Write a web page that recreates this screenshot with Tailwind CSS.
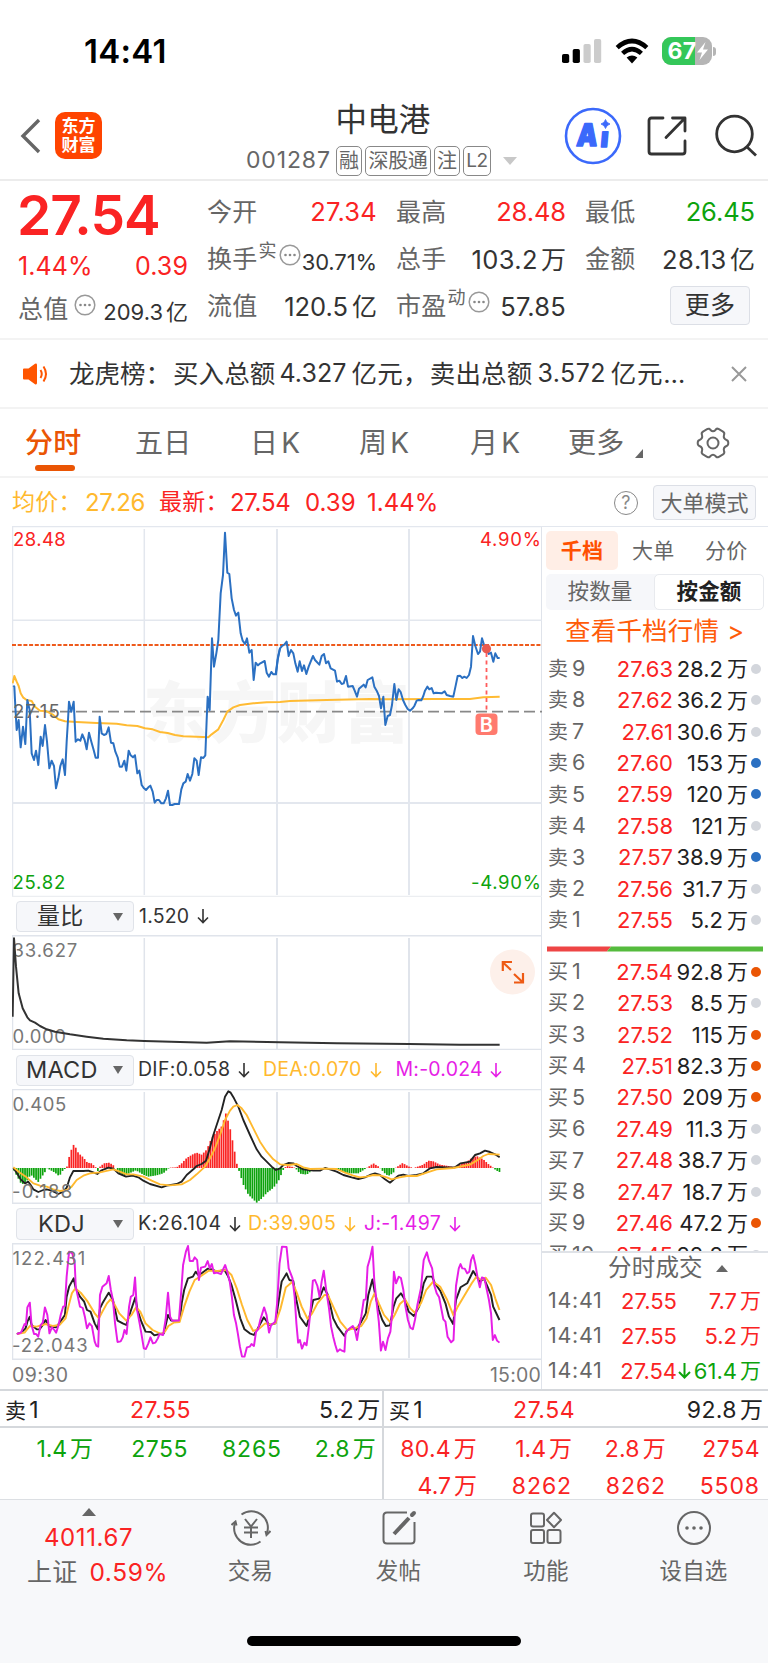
<!DOCTYPE html>
<html lang="zh-CN">
<head>
<meta charset="utf-8">
<title>中电港 001287</title>
<script src="https://cdn.jsdelivr.net/npm/@tailwindcss/browser@4"></script>
</head>
<body class="w-[768px] h-[1663px] overflow-hidden bg-white font-[Inter,'Noto_Sans_CJK_SC',sans-serif] leading-none text-[#333] tracking-[0.2px] whitespace-nowrap">

<!-- status bar -->
<div class="h-[100px] flex items-start justify-between pl-[84px] pr-[52px] text-black">
  <div class="mt-[35px] text-[33px] font-semibold tracking-[0.300px]">14:41</div>
  <div class="flex mt-[36px] items-center h-[30px]">
    <svg class="w-[40px] h-[26px]" viewBox="0 0 40 26"><g fill="#000"><rect x="0" y="16" width="7.2" height="9" rx="1.8"/><rect x="10.700" y="11" width="7.200" height="14" rx="1.8"/></g><g fill="#ccc"><rect x="21.500" y="6" width="7.200" height="19" rx="1.8"/><rect x="32" y="1" width="7.200" height="24" rx="1.800"/></g></svg>
    <svg class="ml-[13px] w-[34px] h-[26px]" viewBox="0 0 34 26"><g fill="none" stroke="#000" stroke-width="4.6"><path d="M2.200 9.600Q17 -3.600 31.800 9.600"/><path d="M7.600 15.400Q17 7 26.400 15.400"/></g><path d="M11.600 19.600Q17 15.400 22.400 19.600L17 25.400Z" fill="#000"/></svg>
    <div class="ml-[13px] relative w-[50px] h-[28px] rounded-[9px] overflow-hidden bg-[#b5b5b5]">
      <div class="w-[33px] h-full bg-[#34c759]"></div>
      <div class="absolute inset-0 flex items-center pl-[6px] text-white text-[23px] font-bold">67<svg class="w-[13px] h-[20px]" viewBox="0 0 13 20"><path d="M9.500 1L1 11.500H6L3.500 19L12 8.500H7Z" fill="#fff"/></svg></div>
    </div>
    <div class="ml-[1.500px] w-[3px] h-[9px] rounded-r-full bg-[#b5b5b5]"></div>
  </div>
</div>

<!-- title bar -->
<div class="h-[81px] border-b-2 border-[#ececec] flex items-start">
  <svg class="mt-[17px] ml-[19px] w-[24px] h-[38px]" viewBox="0 0 24 38"><path d="M20 3L4 19L20 35" fill="none" stroke="#666" stroke-width="3.400"/></svg>
  <div class="mt-[12px] ml-[12px] w-[47px] h-[47px] rounded-[10px] bg-[#ff4400] text-white font-bold text-[17px] flex flex-col items-center justify-center gap-[2px] tracking-normal"><span>东方</span><span>财富</span></div>
  <div class="ml-[144px] w-[275px] flex flex-col">
    <div class="mt-[4px] w-full pr-[1px] text-center text-[31.500px]">中电港</div>
    <div class="mt-[10px] flex items-center h-[30px] text-[#666] text-[21px]">
      <span class="w-[90px] text-[23px] tracking-[0.85px]">001287</span>
      <span class="w-[26px] h-[30px] border-[1.500px] border-[#888] rounded-[5px] flex items-center justify-center text-[20px]">融</span>
      <span class="ml-[3px] w-[66px] h-[30px] border-[1.500px] border-[#888] rounded-[5px] flex items-center justify-center text-[20px] tracking-[-0.300px]">深股通</span>
      <span class="ml-[3px] w-[26px] h-[30px] border-[1.500px] border-[#888] rounded-[5px] flex items-center justify-center text-[20px]">注</span>
      <span class="ml-[3px] w-[28px] h-[30px] border-[1.500px] border-[#888] rounded-[5px] flex items-center justify-center text-[19px] tracking-[-0.500px]">L2</span>
      <svg class="ml-[12px] w-[14px] h-[8px]" viewBox="0 0 14 8"><path d="M0 0H14L7 8Z" fill="#c8c8c8"/></svg>
    </div>
  </div>
  <svg class="ml-[43px] mt-[7px] w-[58px] h-[58px]" viewBox="0 0 58 58" fill="#3b69fb"><circle cx="29" cy="29" r="27" fill="#fff" stroke="#3b69fb" stroke-width="2.600"/><g transform="translate(0 39) skewX(-5)" font-weight="900" stroke="#3b69fb" stroke-width="1.600" stroke-linejoin="round"><text x="12" y="0" font-size="31" textLength="21" lengthAdjust="spacingAndGlyphs">A</text><text x="36" y="1" font-size="28" textLength="8" lengthAdjust="spacingAndGlyphs">ı</text></g><path d="M41.500 12.500Q42.500 16 46 17Q42.500 18 41.500 21.500Q40.500 18 37 17Q40.500 16 41.500 12.500Z" stroke="#3b69fb" stroke-width=".8"/></svg>
  <svg class="ml-[24px] mt-[15px] w-[42px] h-[42px]" viewBox="0 0 42 42" fill="none" stroke="#333" stroke-width="2.800" stroke-linecap="round" stroke-linejoin="round"><path d="M17 3H5.500Q3 3 3 5.500V36.500Q3 39 5.500 39H36.500Q39 39 39 36.500V26"/><path d="M26.500 3H39V16M38 4L20 22.500"/></svg>
  <svg class="ml-[26px] mt-[13px] w-[46px] h-[46px]" viewBox="0 0 46 46" fill="none" stroke="#333" stroke-width="2.800"><circle cx="20.500" cy="21" r="17.800"/><path d="M32.500 33.500L42 42.500"/></svg>
</div>

<!-- quote summary -->
<div class="h-[159px] border-b-2 border-[#f3f3f3] pl-[18px] pt-[7px] grid grid-cols-[170px_170px_170px_170px] gap-x-[19px] text-[25px] text-[#666]">
  <div class="flex flex-col">
    <div class="h-[55px] flex items-center text-[55px] font-semibold text-[#fa2323] tracking-[-0.900px] -ml-[1px]">27.54</div>
    <div class="h-[47px] flex items-center justify-between text-[#fa2323] tracking-[0.100px]"><span>1.44%</span><span>0.39</span></div>
    <div class="h-[39px] flex items-center"><span>总值</span><svg class="ml-[6px] mb-[9px] w-[22px] h-[22px]" viewBox="0 0 22 22"><circle cx="11" cy="11" r="9.800" fill="none" stroke="#999" stroke-width="1.500"/><g fill="#888"><circle cx="6.500" cy="11" r="1.300"/><circle cx="11" cy="11" r="1.300"/><circle cx="15.500" cy="11" r="1.300"/></g></svg><span class="ml-auto mt-[5px] text-[22px] text-[#333] tracking-[0]">209.3<span class="ml-[3px]">亿</span></span></div>
  </div>
  <div class="flex flex-col text-[25.500px]">
    <div class="h-[48px] flex items-center justify-between"><span class="text-[25px]">今开</span><span class="text-[#fa2323]">27.34</span></div>
    <div class="h-[47px] flex items-center"><span class="text-[25px]">换手</span><span class="ml-[1px] mb-[17px] text-[18px]">实</span><svg class="ml-[2px] mb-[9px] w-[22px] h-[22px]" viewBox="0 0 22 22"><circle cx="11" cy="11" r="9.800" fill="none" stroke="#999" stroke-width="1.500"/><g fill="#888"><circle cx="6.500" cy="11" r="1.300"/><circle cx="11" cy="11" r="1.300"/><circle cx="15.500" cy="11" r="1.300"/></g></svg><span class="ml-auto mt-[4px] text-[22px] text-[#333] tracking-[-0.100px]">30.71%</span></div>
    <div class="h-[47px] flex items-center justify-between"><span class="text-[25px]">流值</span><span class="text-[#333] tracking-[0]">120.5<span class="ml-[4px] text-[25px]">亿</span></span></div>
  </div>
  <div class="flex flex-col text-[25.500px]">
    <div class="h-[48px] flex items-center justify-between"><span class="text-[25px]">最高</span><span class="text-[#fa2323] tracking-[-0.100px]">28.48</span></div>
    <div class="h-[47px] flex items-center justify-between"><span class="text-[25px]">总手</span><span class="text-[#333] tracking-[0.400px]">103.2<span class="ml-[3px] text-[25px] tracking-[0]">万</span></span></div>
    <div class="h-[47px] flex items-center"><span class="text-[25px]">市盈</span><span class="ml-[1px] mb-[17px] text-[18px]">动</span><svg class="ml-[2px] mb-[9px] w-[22px] h-[22px]" viewBox="0 0 22 22"><circle cx="11" cy="11" r="9.800" fill="none" stroke="#999" stroke-width="1.500"/><g fill="#888"><circle cx="6.500" cy="11" r="1.300"/><circle cx="11" cy="11" r="1.300"/><circle cx="15.500" cy="11" r="1.300"/></g></svg><span class="ml-auto text-[#333]">57.85</span></div>
  </div>
  <div class="flex flex-col text-[25.500px]">
    <div class="h-[48px] flex items-center justify-between"><span class="text-[25px]">最低</span><span class="text-[#0da30d] tracking-[-0.100px]">26.45</span></div>
    <div class="h-[47px] flex items-center justify-between"><span class="text-[25px]">金额</span><span class="text-[#333] tracking-[0.600px]">28.13<span class="ml-[3px] text-[25px] tracking-[0]">亿</span></span></div>
    <div class="h-[47px] flex items-center justify-end pr-[5px]"><span class="w-[80px] h-[39px] mb-[3px] rounded-[4px] border-[1.500px] border-[#dcdfe6] bg-[#f6f7fa] text-[25px] text-[#333] flex items-center justify-center">更多</span></div>
  </div>
</div>

<!-- news -->
<div class="h-[69px] border-b-2 border-[#f3f3f3] flex items-center pl-[22px] text-[25.500px]">
  <svg class="w-[26px] h-[22px]" viewBox="0 0 26 22"><path d="M1 6.500Q1 5.500 2 5.500H6.500L13 .8Q15 0 15 2V20Q15 22 13 21.200L6.500 16.500H2Q1 16.500 1 15.500Z" fill="#ff5500"/><path d="M18.500 7Q21 11 18.500 15M21.500 3.500Q26.500 11 21.500 18.500" fill="none" stroke="#ff5500" stroke-width="2"/></svg>
  <span class="ml-[21px] tracking-[0]">龙虎榜：</span><span class="ml-[2px] tracking-[0.100px]">买入总额</span><span class="ml-[4px] tracking-[0.100px] text-[25px]">4.327</span><span class="ml-[5px]">亿元，</span><span class="ml-[1px] tracking-[0.200px]">卖出总额</span><span class="ml-[5px] tracking-[0.400px] text-[25px]">3.572</span><span class="ml-[5px] tracking-[0.700px]">亿元…</span>
  <svg class="absolute left-[730px] w-[18px] h-[18px]" viewBox="0 0 18 18"><path d="M2 2L16 16M16 2L2 16" stroke="#999" stroke-width="2"/></svg>
</div>

<!-- period tabs -->
<div class="h-[69px] border-b-2 border-[#f3f3f3] flex items-center text-[28px] text-[#666] relative">
  <span class="ml-[25px] w-[110px] text-[#ea5504] font-medium">分时</span>
  <span class="w-[115px]">五日</span>
  <span class="w-[109px]">日<span class="ml-[3px]">K</span></span>
  <span class="w-[111px]">周<span class="ml-[3px]">K</span></span>
  <span class="w-[98px]">月<span class="ml-[3px]">K</span></span>
  <span>更多</span>
  <svg class="ml-[11px] mt-[22px] w-[8px] h-[9px]" viewBox="0 0 8 9"><path d="M8 0V9H0Z" fill="#666"/></svg>
  <svg class="ml-[53px] w-[34px] h-[34px]" viewBox="0 0 34 34" fill="none" stroke="#666" stroke-width="2"><path d="M11.500 3Q13.500 2 14.500 4Q17 6.500 19.500 4Q20.500 2 22.500 3L27 5.600Q29 7 28 9Q27 12.500 30.500 14Q32.300 14.500 32.300 17Q32.300 19.500 30.500 20Q27 21.500 28 25Q29 27 27 28.400L22.500 31Q20.500 32 19.500 30Q17 27.500 14.500 30Q13.500 32 11.500 31L7 28.400Q5 27 6 25Q7 21.500 3.500 20Q1.700 19.500 1.700 17Q1.700 14.500 3.500 14Q7 12.500 6 9Q5 7 7 5.600Z"/><circle cx="17" cy="17" r="5.500"/></svg>
  <div class="absolute left-[35px] top-[56px] w-[40px] h-[6px] rounded-[3px] bg-[#ea5504]"></div>
</div>

<!-- average / last price -->
<div class="h-[48px] flex items-center pl-[12px] pt-px text-[23px]">
  <span class="w-[73px] text-[#ffb92e]">均价：</span><span class="w-[74px] text-[24px] tracking-[-0.300px] text-[#ffb92e]">27.26</span>
  <span class="w-[71px] text-[#fa2323]">最新：</span><span class="w-[75px] text-[24px] tracking-[-0.300px] text-[#fa2323]">27.54</span><span class="w-[62px] text-[24px] tracking-[0] text-[#fa2323]">0.39</span><span class="text-[24px] tracking-[0] text-[#fa2323]">1.44%</span>
  <span class="ml-auto w-[24px] h-[24px] rounded-full border-[1.500px] border-[#888] text-[#888] text-[18px] flex items-center justify-center">?</span>
  <span class="ml-[15px] mr-[12px] w-[103px] h-[35px] rounded-[4px] border-[1.500px] border-[#dcdfe6] bg-[#f6f7fa] text-[22px] tracking-normal text-[#666] flex items-center justify-center">大单模式</span>
</div>

<!-- charts and order book -->
<div class="flex h-[863px]">
  <div class="w-[542px] flex flex-col border-r border-[#dfe3ea]">
    <svg class="ml-[12px] w-[530px] h-[371px] shrink-0" viewBox="12 526 530 371" fill="none">
      <text x="143" y="737" font-size="66" font-weight="900" fill="#f6f6f6" textLength="267">东方财富</text>
      <g stroke="#e3e7ee" stroke-width="1.500"><path d="M12 526.500H542M12.500 526V897M12 620.300H542M144.300 529V895"/><path d="M12 803H542M277 529V895M409 529V895" stroke-width="2"/><path d="M12 896.500H542" stroke="#eceef1"/></g>
      <path d="M12 711.700H542" stroke="#888" stroke-width="1.700" stroke-dasharray="11 5"/>
      <path d="M12 645H542" stroke="#ee5a1c" stroke-width="2.200" stroke-dasharray="4 1.700"/>
      <g stroke-linejoin="round">
        <g transform="translate(0 520) scale(.33333)"><path stroke="#ffbb33" stroke-width="6" d="M38,490 43,468 50,485 56,498 62,520 70,533 80,540 95,543 105,560 120,572 140,574 160,585 175,598 195,604 230,606 290,609 350,611 380,616 412,618 435,625 458,628 480,636 503,639 525,645 550,649 590,650 625,652 635,643 655,628 670,600 682,575 700,562 720,555 760,550 800,547 840,546 870,543 980,540 1110,537 1160,538 1310,537 1410,537 1450,532 1499,530"/>
        <path stroke="#2b70c2" stroke-width="6" d="M40,497 43,500 46,560 50,630 56,600 62,682 69,620 76,672 82,540 89,570 95,700 102,720 108,692 115,735 122,650 128,678 135,615 141,665 148,745 155,722 162,738 168,805 175,775 181,738 188,718 195,765 200,665 204,600 207,545 214,575 221,545 227,665 234,658 241,662 247,643 254,660 260,688 267,638 274,665 281,690 287,713 294,713 299,590 305,640 312,645 319,642 326,622 333,668 340,670 346,695 353,712 359,740 366,740 373,722 379,752 386,692 392,706 399,712 405,706 412,760 418,752 425,795 432,805 438,810 445,802 451,797 458,815 464,848 470,840 477,840 484,850 491,850 498,835 504,812 510,855 517,855 524,852 537,852 544,808 550,790 557,785 563,762 570,782 577,762 583,715 590,722 596,765 603,712 610,714 616,706 620,600 623,530 629,570 636,355 642,440 649,400 655,360 662,220 669,165 675,38 682,158 688,162 695,235 702,270 708,287 715,278 722,340 728,362 735,372 741,355 748,398 755,390 761,480 767,428 774,436 781,430 794,423 800,458 807,470 814,456 820,463 828,463 833,420 840,385"/></g>
        <g transform="translate(270 520) scale(.33333)"><path stroke="#2b70c2" stroke-width="6" d="M17,463 24,410 30,385 36,378 43,374 50,365 56,408 63,390 70,400 76,430 83,455 89,424 96,453 102,436 109,462 116,440 122,425 129,408 135,420 148,434 155,408 162,402 168,430 175,424 182,445 195,452 201,485 208,482 215,492 221,490 228,468 234,500 248,498 254,512 261,530 267,506 281,494 287,502 293,480 307,472 313,500 320,512 327,528 333,565 340,530 346,615 353,588 360,585 366,555 373,492 379,540 386,508 392,516 399,540 406,555 413,567 420,572 428,565 433,558 440,542 446,540 454,541 460,528 465,512 472,500 478,508 485,504 491,520 498,518 515,520 524,514 530,525 540,528 550,530 557,497 563,468 570,467 577,474 583,470 590,474 597,465 603,440 609,348 616,378 624,402 630,395 636,355 643,378 650,385 656,402 663,398 670,425 676,400 683,414 689,414"/></g>
      </g>
      <g font-size="18.500"><text x="13" y="545.500" fill="#fa2323" textLength="53">28.48</text><text x="12.500" y="889" fill="#0da30d" textLength="53">25.82</text><text x="541" y="545.500" text-anchor="end" fill="#fa2323" textLength="61">4.90%</text><text x="541" y="889" text-anchor="end" fill="#0da30d" textLength="70">-4.90%</text><text x="13" y="717.500" fill="#666" textLength="47">27.15</text></g>
      <circle cx="486.500" cy="648.700" r="4.600" fill="#e85a50"/><path d="M486.500 653V712" stroke="#ff5c5c" stroke-width="1.800" stroke-dasharray="4 3.500"/>
      <rect x="475.500" y="713.500" width="22" height="21.500" rx="4" fill="#ff7a6e"/><text x="486.500" y="731.500" text-anchor="middle" font-size="20" font-weight="600" fill="#fff">B</text>
    </svg>

    <div class="h-[38px] shrink-0 flex items-center pl-[16px] pt-px text-[19.500px]">
      <div class="w-[118px] h-[31px] rounded-[4px] border-[1.500px] border-[#e0e3e9] bg-[#f6f7fa] flex items-center justify-between pl-[20px] pr-[10px] text-[23px] text-[#333]"><span>量比</span><svg class="w-[10px] h-[8px]" viewBox="0 0 10 8"><path d="M0 0H10L5 8Z" fill="#666"/></svg></div>
      <span class="ml-[5px]">1.520</span><svg class="ml-[8px] w-[12px] h-[15px]" viewBox="0 0 12 15"><path d="M6 0V13.500M1 8.500L6 13.500L11 8.500" fill="none" stroke="#333" stroke-width="1.600"/></svg>
    </div>
    <svg class="ml-[12px] w-[530px] h-[115px] shrink-0" viewBox="12 935 530 115" fill="none">
      <g stroke="#e0e4eb" stroke-width="1.500"><path d="M12 935.700H542M12 1049.500H542M12.500 935V1050M144.300 938V1050"/><path d="M277 938V1050M409 938V1050" stroke-width="2"/></g>
      <g font-size="18.500" fill="#777"><text x="12.500" y="956.500" textLength="65">33.627</text><text x="12.500" y="1043" textLength="53.500">0.000</text></g>
      <g transform="translate(0 890) scale(.33333)"><path stroke="#333" stroke-width="6" stroke-linejoin="round" d="M38,380 42,145 48,230 56,310 68,355 82,382 90,391 105,398 120,408 140,418 165,425 210,433 260,440 310,446 380,451 433,453 540,456 620,458 690,454 840,457 1010,460 1227,462 1380,464 1499,464"/></g>
      <circle cx="512.500" cy="972" r="22.500" fill="#fdf0ea"/><path d="M511 970L503 962.500M502.800 971V962H512M514 974L522.500 982M523 973V982.500H514" stroke="#ee5a14" stroke-width="2.200"/>
    </svg>

    <div class="h-[39px] shrink-0 flex items-center pl-[16px] pt-px text-[19.500px]">
      <div class="w-[118px] h-[31px] rounded-[4px] border-[1.500px] border-[#e0e3e9] bg-[#f6f7fa] flex items-center justify-between pl-[9px] pr-[10px] text-[23.500px] text-[#333]"><span>MACD</span><svg class="w-[10px] h-[8px]" viewBox="0 0 10 8"><path d="M0 0H10L5 8Z" fill="#666"/></svg></div>
      <span class="ml-[4px] w-[100px] tracking-[0.300px]">DIF:0.058</span><svg class="w-[12px] h-[15px]" viewBox="0 0 12 15"><path d="M6 0V13.500M1 8.500L6 13.500L11 8.500" fill="none" stroke="#333" stroke-width="1.600"/></svg>
      <span class="ml-[13px] w-[106.500px] text-[#ffb92e]">DEA:0.070</span><svg class="w-[12px] h-[15px]" viewBox="0 0 12 15"><path d="M6 0V13.500M1 8.500L6 13.500L11 8.500" fill="none" stroke="#ffb92e" stroke-width="1.600"/></svg>
      <span class="ml-[14px] w-[94px] text-[#e61ee6]">M:-0.024</span><svg class="w-[12px] h-[15px]" viewBox="0 0 12 15"><path d="M6 0V13.500M1 8.500L6 13.500L11 8.500" fill="none" stroke="#e61ee6" stroke-width="1.600"/></svg>
    </div>
    <svg class="ml-[12px] w-[530px] h-[115px] shrink-0" viewBox="12 1089 530 115" fill="none">
      <g stroke="#e0e4eb" stroke-width="1.500"><path d="M12 1089.500H542M12 1203.300H542M12.500 1089V1204M144.300 1092V1203"/><path d="M277 1092V1203M409 1092V1203" stroke-width="2"/></g>
      <g transform="translate(0 890) scale(.33333)" stroke-width="5.600" stroke-linejoin="round"><g id="bars"></g>
        <path stroke="#222" d="M40,834 50,848 62,868 75,880 85,875 92,885 100,898 115,906 130,900 140,898 155,902 175,912 190,905 200,893 210,862 220,843 250,843 265,842 292,852 303,842 325,833 340,836 355,850 378,860 398,857 415,862 430,872 450,882 485,892 500,887 530,882 545,875 560,855 580,838 590,828 605,822 618,812 628,780 640,735 655,690 665,660 675,620 685,604 692,608 702,625 715,650 730,690 750,735 770,778 785,800 800,815 815,830 828,840 840,835 850,825 865,819 880,820 890,828 910,838 940,842 960,842 975,834 990,838 1010,845 1030,855 1055,862 1075,867 1095,862 1110,855 1125,850 1140,855 1155,868 1170,878 1182,868 1195,857 1210,854 1225,858 1250,855 1270,850 1290,835 1310,831 1340,832 1365,832 1382,820 1410,815 1425,795 1440,790 1455,782 1470,786 1485,793 1499,802"/>
        <path stroke="#ffb92e" d="M40,832 60,848 80,862 100,880 120,887 140,890 160,898 180,903 200,900 215,890 230,870 250,857 270,850 300,847 340,838 360,845 380,853 400,853 430,860 455,872 480,883 510,886 545,883 570,870 590,853 615,830 630,805 645,775 660,735 675,690 690,662 700,650 712,645 725,655 740,675 760,715 780,755 800,785 820,808 840,823 865,825 890,822 910,832 930,837 970,836 1010,837 1035,848 1060,857 1080,862 1100,860 1120,855 1140,856 1160,862 1175,868 1195,863 1220,858 1250,858 1280,848 1310,838 1360,834 1410,824 1430,812 1450,798 1465,792 1499,794"/></g>
      <g font-size="18.500" fill="#777"><text x="12.500" y="1110.500" textLength="54">0.405</text><text x="12" y="1197.500" textLength="60.500">-0.188</text></g>
    </svg>

    <div class="h-[39px] shrink-0 flex items-center pl-[16px] pt-px text-[19.500px]">
      <div class="w-[118px] h-[32px] rounded-[4px] border-[1.500px] border-[#e0e3e9] bg-[#f6f7fa] flex items-center justify-between pl-[21px] pr-[10px] text-[23.500px] text-[#333]"><span>KDJ</span><svg class="w-[10px] h-[8px]" viewBox="0 0 10 8"><path d="M0 0H10L5 8Z" fill="#666"/></svg></div>
      <span class="ml-[4px] w-[91px] tracking-[0.600px]">K:26.104</span><svg class="w-[12px] h-[15px]" viewBox="0 0 12 15"><path d="M6 0V13.500M1 8.500L6 13.500L11 8.500" fill="none" stroke="#333" stroke-width="1.600"/></svg>
      <span class="ml-[7px] w-[96px] tracking-[0.400px] text-[#ffb92e]">D:39.905</span><svg class="w-[12px] h-[15px]" viewBox="0 0 12 15"><path d="M6 0V13.500M1 8.500L6 13.500L11 8.500" fill="none" stroke="#ffb92e" stroke-width="1.600"/></svg>
      <span class="ml-[8px] w-[85px] tracking-[0.300px] text-[#e61ee6]">J:-1.497</span><svg class="w-[12px] h-[15px]" viewBox="0 0 12 15"><path d="M6 0V13.500M1 8.500L6 13.500L11 8.500" fill="none" stroke="#e61ee6" stroke-width="1.600"/></svg>
    </div>
    <svg class="ml-[12px] w-[530px] h-[117px] shrink-0" viewBox="12 1243 530 117" fill="none">
      <g stroke="#e0e4eb" stroke-width="1.500"><path d="M12 1243.700H542M12 1359.200H542M12.500 1243V1359M144.300 1246V1358"/><path d="M277 1246V1358M409 1246V1358" stroke-width="2"/></g>
      <g transform="translate(0 1200) scale(.35075 .33333)" stroke-width="5.600" stroke-linejoin="round">
        <path stroke="#222" d="M48,402 60,398 73,385 78,365 85,350 90,375 105,388 113,388 122,375 130,360 141,380 160,382 172,365 185,345 190,290 197,260 210,235 216,265 228,290 240,305 248,330 258,335 270,370 279,388 285,325 292,310 310,278 322,300 335,362 350,370 360,375 372,335 386,292 392,330 403,365 415,395 430,396 440,406 455,402 467,400 479,345 488,362 512,362 518,310 525,270 536,235 550,230 558,215 565,225 575,220 592,206 604,208 618,215 640,210 650,228 660,255 672,300 685,355 697,388 712,400 724,405 735,385 752,352 768,375 785,370 792,320 803,245 817,220 825,240 836,243 845,300 855,350 874,378 885,340 893,300 910,296 923,262 935,285 950,355 962,380 982,408 988,393 1005,382 1015,390 1030,365 1043,340 1050,285 1062,238 1070,285 1080,330 1090,360 1100,378 1112,376 1122,320 1130,295 1143,280 1155,300 1165,335 1180,348 1195,320 1208,250 1217,230 1232,230 1240,250 1255,272 1270,310 1280,350 1292,372 1300,300 1313,262 1332,250 1349,213 1358,228 1368,245 1380,236 1392,265 1400,285 1406,320 1424,360"/>
        <path stroke="#ffb92e" d="M48,402 70,398 85,378 105,380 130,372 150,378 170,375 187,355 195,320 205,280 215,265 230,278 250,305 270,340 282,355 292,335 305,310 315,298 325,310 340,340 360,362 375,345 388,322 400,335 415,370 435,390 460,402 470,395 480,378 495,368 512,366 525,320 540,275 555,240 570,230 595,212 620,213 645,210 660,225 675,265 690,315 705,360 722,393 740,385 756,370 770,374 785,370 800,325 815,262 833,246 845,275 860,320 877,357 890,340 905,310 925,285 935,285 950,320 970,365 990,390 1010,385 1030,378 1045,355 1057,305 1068,280 1080,310 1095,345 1113,367 1125,345 1140,312 1155,298 1170,325 1182,338 1200,310 1215,270 1235,245 1255,260 1275,300 1293,347 1305,320 1325,285 1345,250 1358,230 1372,240 1385,233 1400,255 1412,295 1424,330"/>
        <path stroke="#e61ee6" d="M48,402 60,398 70,372 74,375 78,322 85,308 90,375 97,402 103,402 109,410 116,375 122,368 128,322 135,345 141,400 148,382 155,390 160,398 167,375 173,345 180,320 185,318 190,230 197,155 206,160 213,190 216,260 222,290 228,320 236,324 242,350 248,385 255,370 262,378 270,425 275,438 280,440 285,285 292,260 304,250 310,228 316,270 322,300 328,370 335,426 344,424 350,412 355,390 361,402 368,320 373,290 380,285 385,232 390,325 398,370 403,400 410,445 416,447 423,430 429,412 436,430 443,428 450,415 455,402 465,405 472,360 479,278 485,350 491,362 510,362 517,270 522,195 530,155 536,138 541,183 550,183 555,172 562,180 567,240 573,203 585,200 592,183 598,205 604,192 610,220 618,218 630,222 642,195 648,215 655,245 661,290 667,345 673,370 678,400 684,440 690,470 697,470 704,442 712,440 717,432 724,438 730,395 736,388 742,360 753,322 760,345 767,398 773,375 785,365 790,310 797,190 804,140 817,141 823,205 834,235 840,290 845,370 850,428 855,420 861,446 868,428 874,436 880,385 886,325 892,242 898,240 905,258 911,290 917,245 923,212 930,270 938,325 944,380 950,410 956,435 962,455 969,448 975,452 982,455 985,402 990,392 997,385 1006,378 1012,390 1018,420 1024,378 1030,350 1037,300 1043,298 1048,200 1055,175 1062,140 1067,240 1074,310 1080,365 1086,452 1092,425 1099,450 1106,415 1113,395 1118,340 1123,215 1129,250 1137,230 1143,234 1150,270 1156,320 1163,360 1170,383 1177,388 1183,360 1190,315 1200,265 1208,180 1217,157 1223,182 1232,205 1238,255 1245,280 1252,292 1258,325 1264,358 1270,365 1276,410 1286,427 1293,420 1300,258 1308,205 1313,192 1318,205 1325,206 1332,220 1338,215 1343,180 1349,165 1355,192 1362,235 1368,262 1374,232 1381,235 1387,265 1394,300 1400,340 1405,420 1411,405 1417,422 1424,428"/></g>
      <g font-size="18.500" fill="#777"><text x="12.500" y="1264.500" textLength="73">122.431</text><text x="12" y="1351.500" textLength="76">-22.043</text></g>
    </svg>
    <div class="h-[29px] flex items-center justify-between pl-[12px] text-[19.500px] text-[#777] pt-[2px]"><span class="tracking-[0.400px]">09:30</span><span>15:00</span></div>
  </div>

  <!-- right column -->
  <div class="w-[226px] flex flex-col border-t border-[#e3e7ee]">
    <div class="mt-[4px] ml-[4px] h-[38px] flex items-center text-[21px] text-[#666]"><span class="w-[72px] h-[39px] rounded-[5px] bg-[#ffeee6] text-[#ff5000] font-bold flex items-center justify-center">千档</span><span class="ml-[14px] w-[73px]">大单</span><span>分价</span></div>
    <div class="mt-[5px] ml-[4px] w-[218px] h-[36px] rounded-[5px] bg-[#f6f7fa] flex items-center text-[21.500px] text-[#666]"><span class="w-[108px] text-center">按数量</span><span class="w-[110px] h-[36px] rounded-[5px] border-[1.500px] border-[#e8eaee] bg-white text-[#222] font-bold flex items-center justify-center">按金额</span></div>
    <div class="h-[43px] pb-px ml-[23px] flex items-center text-[25.500px] text-[#ff5c0a]"><span>查看千档行情</span><span class="ml-[8px]">&gt;</span></div>
    <div id="asks" class="h-[283.500px] flex flex-col"></div>
    <svg class="mt-[9px] ml-[5px] w-[216px] h-[6px] shrink-0" viewBox="0 0 216 6"><path d="M0 .5H64L60 5.500H0Z" fill="#ee4545"/><path d="M64 .5H216V5.500H60Z" fill="#55bb3d"/></svg>
    <div id="bids" class="mt-[4.500px] h-[297px] flex flex-col overflow-hidden border-b-2 border-[#dfe2e7]"></div>
    <div class="h-[30px] flex items-center pl-[66px] text-[23.500px] text-[#666]"><span>分时成交</span><svg class="ml-[13px] w-[12px] h-[7px]" viewBox="0 0 12 7"><path d="M6 0L12 7H0Z" fill="#666"/></svg></div>
    <div id="trades" class="flex flex-col"></div>
  </div>
</div>

<!-- best bid / ask queues -->
<div class="h-[110px] overflow-hidden flex border-t-2 border-[#d5d8dc] text-[23px] text-[#222]">
  <div class="w-[384px] border-r-2 border-[#d5d8dc]">
    <div class="h-[37px] border-b-2 border-[#d5d8dc] grid grid-cols-[131px_188px_63px] items-center pt-[3px]"><span class="pl-[5px] text-[21px]">卖<span class="ml-[3px] text-[23px]">1</span></span><span class="text-[#fa2323] tracking-[0.500px] -ml-[1px]">27.55</span><span class="text-right pr-[4px] tracking-[0.400px]">5.2<span class="ml-[3px] tracking-[0]">万</span></span></div>
    <div class="h-[43px] grid grid-cols-[93px_95px_94px_94px] items-center text-right text-[#0da30d]"><span class="tracking-[-0.100px]">1.4<span class="ml-[3px]">万</span></span><span class="tracking-[0.500px]">2755</span><span class="tracking-[0.900px]">8265</span><span>2.8<span class="ml-[3px]">万</span></span></div>
  </div>
  <div class="w-[384px]">
    <div class="h-[37px] border-b-2 border-[#d5d8dc] grid grid-cols-[130px_170px_79px] items-center pt-[3px]"><span class="pl-[5px] text-[21px]">买<span class="ml-[3px] text-[23px]">1</span></span><span class="text-[#fa2323] tracking-[0.600px] -ml-[1px]">27.54</span><span class="text-right tracking-[0.400px]">92.8<span class="ml-[3px] tracking-[0]">万</span></span></div>
    <div class="h-[40px] grid grid-cols-[93px_95px_94px_94px] items-center text-right text-[#fa2323] pt-[3px]"><span class="tracking-[0.200px]">80.4<span class="ml-[3px]">万</span></span><span class="tracking-[0]">1.4<span class="ml-[3px]">万</span></span><span class="tracking-[0.200px]">2.8<span class="ml-[3px]">万</span></span><span class="tracking-[0.500px]">2754</span></div>
    <div class="h-[36px] grid grid-cols-[93px_95px_94px_94px] items-center text-right text-[#fa2323] tracking-[0.900px] pt-px"><span class="tracking-[0]">4.7<span class="ml-[3px]">万</span></span><span>8262</span><span>8262</span><span>5508</span></div>
  </div>
</div>

<!-- bottom navigation -->
<div class="h-[164px] bg-[#f7f8fa] border-t border-[#dcdfe3] relative text-[22.500px] text-[#666]">
  <div class="grid grid-cols-[177px_147px_149px_146px_149px]">
    <div class="flex flex-col items-center"><svg class="mt-[8px] w-[14px] h-[8px]" viewBox="0 0 14 8"><path d="M7 0L14 8H0Z" fill="#666"/></svg><span class="mt-[10px] text-[24px] text-[#fa2323] tracking-[0.600px]">4011.67</span><span class="mt-[10px] w-full flex items-center pl-[27px]"><span class="text-[25px]">上证</span><span class="ml-[12px] text-[24.500px] text-[#fa2323] tracking-[0.600px]">0.59%</span></span></div>
    <div class="flex flex-col items-center"><svg class="mt-[8px] w-[40px] h-[40px]" viewBox="0 0 40 40" fill="none" stroke="#666" stroke-width="2"><path d="M10.500 6.500A16.500 16.500 0 0 1 36 25M29.500 33.500A16.500 16.500 0 0 1 4 15"/><path d="M0.500 17L4.500 13.500L5.500 17.500M39.500 23L35.500 27L34.500 23"/><path d="M14 11L20 18.500L26 11M20 18.500V30M13 19.500H27M13 24.500H27"/></svg><span class="mt-[12px]">交易</span></div>
    <div class="flex flex-col items-center"><svg class="mt-[8px] w-[40px] h-[40px]" viewBox="0 0 40 40" fill="none" stroke="#666" stroke-width="2"><path d="M28 4.500H8Q4.500 4.500 4.500 8V32Q4.500 35.500 8 35.500H32Q35.500 35.500 35.500 32V14"/><path d="M15 26L30 10" stroke-width="4"/><path d="M33 7L35 5" stroke-width="4" stroke-linecap="round"/></svg><span class="mt-[12px]">发帖</span></div>
    <div class="flex flex-col items-center"><svg class="mt-[8px] w-[40px] h-[40px]" viewBox="0 0 40 40" fill="none" stroke="#666" stroke-width="2"><rect x="5" y="5.500" width="13" height="13" rx="2"/><rect x="5" y="22" width="13" height="13" rx="2"/><rect x="21.500" y="22" width="13" height="13" rx="2"/><path d="M28 4.800L35 12L28 19.200L21 12Z" stroke-linejoin="round"/></svg><span class="mt-[12px]">功能</span></div>
    <div class="flex flex-col items-center"><svg class="mt-[8px] w-[40px] h-[40px]" viewBox="0 0 40 40"><circle cx="20" cy="20" r="16" fill="none" stroke="#666" stroke-width="2"/><g fill="#666"><circle cx="13" cy="20" r="1.800"/><circle cx="20" cy="20" r="1.800"/><circle cx="27" cy="20" r="1.800"/></g></svg><span class="mt-[12px]">设自选</span></div>
  </div>
  <div class="absolute left-[247px] top-[136px] w-[274px] h-[10px] rounded-full bg-black"></div>
</div>

<script>
const dot={g:'bg-[#d3d6dc]',b:'bg-[#2b70c2]',o:'bg-[#ea5504]'};
const row=([side,n,p,v,c])=>`<div class="h-[31.450px] shrink-0 grid grid-cols-[60px_71px_50px_25px_11px] items-center text-[22px] tracking-[0] text-[#222]"><span class="pl-[6px] text-[20px] text-[#666]">${side}<span class="ml-[4px] text-[21.500px]">${n}</span></span><span class="text-right text-[#fa2323]">${p}</span><span class="text-right">${v}</span><span class="text-right text-[21px]">万</span><span class="ml-[3px] w-[10px] h-[10px] rounded-full ${dot[c]}"></span></div>`;
asks.innerHTML=[[9,'27.63','28.2','g'],[8,'27.62','36.2','g'],[7,'27.61','30.6','g'],[6,'27.60','153','b'],[5,'27.59','120','b'],[4,'27.58','121','g'],[3,'27.57','38.9','b'],[2,'27.56','31.7','g'],[1,'27.55','5.2','g']].map(r=>row(['卖',...r])).join('');
bids.innerHTML=[[1,'27.54','92.8','o'],[2,'27.53','8.5','g'],[3,'27.52','115','o'],[4,'27.51','82.3','o'],[5,'27.50','209','o'],[6,'27.49','11.3','g'],[7,'27.48','38.7','g'],[8,'27.47','18.7','g'],[9,'27.46','47.2','o'],[10,'27.45','22.2','g']].map(r=>row(['买',...r])).join('');
trades.innerHTML=[['27.55','7.7',0],['27.55','5.2',0],['27.54','61.4',1]].map(([p,v,d])=>`<div class="h-[35px] grid grid-cols-[65px_70px_60px_24px] items-center text-[22px] tracking-[0]"><span class="pl-[6px] text-[21.500px] tracking-[0.700px] text-[#666]">14:41</span><span class="text-right text-[#fa2323]">${p}</span><span class="flex items-center justify-end ${d?'text-[#0da30d]':'text-[#fa2323]'}">${d?'<svg class="mr-[3px] w-[13px] h-[16px]" viewBox="0 0 13 16"><path d="M6.500 0V14.500M1 9L6.500 14.500L12 9" fill="none" stroke="#0da30d" stroke-width="2"/></svg>':''}${v}</span><span class="text-right text-[21px] ${d?'text-[#0da30d]':'text-[#fa2323]'}">万</span></div>`).join('');
// MACD histogram: [x, height] knots, interpolated once per bar
const k=[40,-4,65,-50,80,-40,92,-20,115,-42,135,-12,140,0,147,-4,165,-14,178,-25,190,-5,200,0,204,20,212,50,222,72,235,45,250,32,262,16,275,14,285,4,290,0,293,-10,300,4,312,14,328,16,345,5,350,-10,370,-23,390,-15,408,-7,430,-20,445,-26,470,-22,490,-16,503,-4,508,1,530,2,545,14,560,30,580,42,590,46,605,40,620,55,635,90,650,110,665,125,678,165,690,120,702,60,712,5,717,-8,730,-50,745,-80,770,-104,785,-92,800,-75,820,-60,835,-40,850,-5,853,0,860,6,880,3,885,0,890,-5,900,-17,920,-20,940,-4,1000,0,1015,-5,1030,-12,1050,-16,1075,-16,1095,-3,1103,2,1120,14,1138,3,1142,-2,1152,-14,1165,-24,1180,-15,1186,0,1192,4,1208,15,1225,5,1240,0,1250,3,1270,10,1285,22,1300,20,1320,10,1345,6,1360,3,1380,10,1400,18,1415,30,1430,36,1450,26,1465,12,1478,2,1482,-2,1490,-8,1503,-14];
let s='';
for(let x=42;x<=1503;x+=6.62){let i=0;while(k[i+2]<x)i+=2;const h=k[i+1]+(k[i+3]-k[i+1])*(x-k[i])/(k[i+2]-k[i]);if(Math.abs(h)<.5)continue;s+=`<rect x="${(x-2.6).toFixed(1)}" y="${(834-Math.max(h,0)).toFixed(1)}" width="5.2" height="${Math.abs(h).toFixed(1)}" fill="${h>0?'#fa2323':'#0da30d'}"/>`}
bars.innerHTML=s;
</script>
</body>
</html>
